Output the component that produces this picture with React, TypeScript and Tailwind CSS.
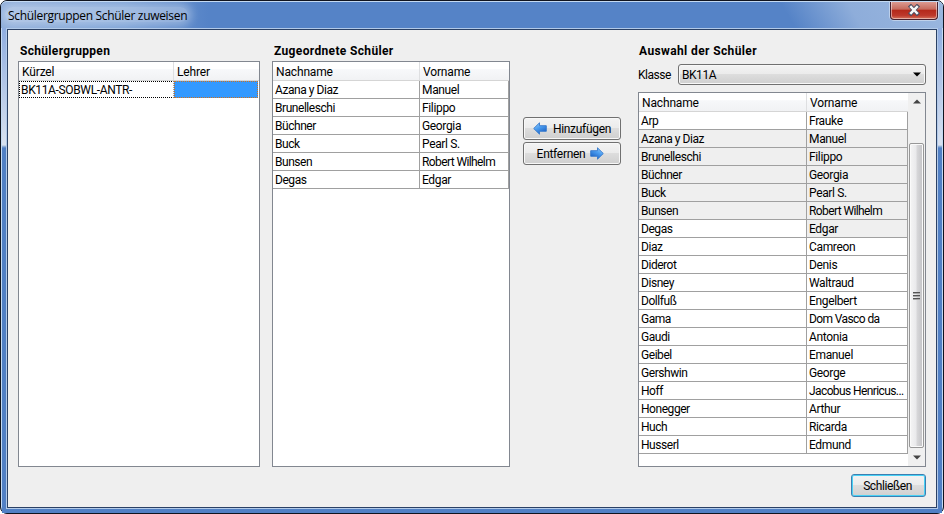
import React from "react";

const assigned = [
  ["Azana y Diaz", "Manuel"],
  ["Brunelleschi", "Filippo"],
  ["Büchner", "Georgia"],
  ["Buck", "Pearl S."],
  ["Bunsen", "Robert Wilhelm"],
  ["Degas", "Edgar"],
];

const pupils = [
  ["Arp", "Frauke"],
  ...assigned,
  ["Diaz", "Camreon"],
  ["Diderot", "Denis"],
  ["Disney", "Waltraud"],
  ["Dollfuß", "Engelbert"],
  ["Gama", "Dom Vasco da"],
  ["Gaudi", "Antonia"],
  ["Geibel", "Emanuel"],
  ["Gershwin", "George"],
  ["Hoff", "Jacobus Henricus..."],
  ["Honegger", "Arthur"],
  ["Huch", "Ricarda"],
  ["Husserl", "Edmund"],
];

function Header({ left, right, leftWidth }: { left: string; right: string; leftWidth: string }) {
  return (
    <div className="flex h-[19px] shrink-0 border-b border-[#d5d5d5] bg-[linear-gradient(#fff_0_40%,#f7f8fa_42%,#f1f2f4)] leading-[20px] tracking-[-0.15px]">
      <div className={`${leftWidth} shrink-0 border-r border-[#dedfe1] pl-[3px]`}>{left}</div>
      <div className="pl-[3px]">{right}</div>
    </div>
  );
}

function Row({ row, leftWidth, grayLeft, grayRight }: { row: string[]; leftWidth: string; grayLeft?: boolean; grayRight?: boolean }) {
  const spacing = row[1].length > 10 ? "tracking-[-0.6px]" : "tracking-[-0.35px]";
  return (
    <div className="flex h-[18px] shrink-0 whitespace-nowrap leading-[19px]">
      <div className={`${leftWidth} shrink-0 border-r border-b border-[#a0a0a0] pl-[2px] ${grayLeft ? "bg-[#efefef]" : "bg-white"}`}>{row[0]}</div>
      <div className={`min-w-0 flex-1 border-r border-b border-[#a0a0a0] pl-[2px] ${spacing} ${grayRight ? "bg-[#efefef]" : "bg-white"}`}>{row[1]}</div>
    </div>
  );
}

function Arrow({ flip }: { flip?: boolean }) {
  return (
    <svg width="14" height="13" viewBox="0 0 14 13" className={flip ? "-scale-x-100" : ""}>
      <defs>
        <linearGradient id="arrow" x1="0" y1="0" x2="0.6" y2="1">
          <stop offset="0" stopColor="#a5d6fb" />
          <stop offset="0.5" stopColor="#4b9df0" />
          <stop offset="1" stopColor="#1c62c4" />
        </linearGradient>
      </defs>
      <path d="M.7 6.5 6.5 .8v2.9h6.8v5.6H6.5v2.9Z" fill="url(#arrow)" stroke="#3478cc" strokeWidth=".9" strokeLinejoin="round" />
    </svg>
  );
}

const button =
  "flex items-center justify-center rounded-[3px] border border-[#707070] bg-[linear-gradient(#f3f3f3,#ebebeb_49%,#dddddd_50%,#cfcfcf)] shadow-[inset_0_0_0_1px_#f8f8f8]";

export default function App() {
  return (
    <div className="h-[514px] w-[944px] overflow-hidden bg-white font-['Roboto','Liberation_Sans',sans-serif] text-[12px] tracking-[-0.45px] text-black">
      <div className="flex h-full flex-col rounded-[7px] border border-[#10141f] bg-[#5180c5] shadow-[inset_0_0_0_1px_#c4daf3]">
        <header className="flex h-[27px] shrink-0 items-start justify-between overflow-hidden rounded-t-[6px] border-t border-[#c4daf3] bg-[linear-gradient(60deg,transparent_83%,#8eadda_90%,#9ab7df),linear-gradient(90deg,#8eadda_0,#789fd5_13%,#5583c7_22%,#5583c7)]">
          <h1 className="mt-[5px] ml-[4px] h-[15px] w-[183px] rounded-[8px] bg-[#ffffff50] pl-[3px] font-['Open_Sans','Noto_Sans',sans-serif] text-[12px] leading-[17px] whitespace-nowrap tracking-[-0.32px] shadow-[0_0_8px_4px_#ffffff50]">Schülergruppen Schüler zuweisen</h1>
          <div className="mt-[-1px] mr-[5px] flex h-[19px] w-[48px] items-center justify-center rounded-b-[4px] border border-t-0 border-[#48202e] bg-[linear-gradient(#dfa198,#c66a5c_46%,#b4281a_50%,#bd382b_80%,#d4725c)] shadow-[inset_0_0_0_1px_#ffffff77,0_0_0_1px_#ffffff66]">
            <svg width="14" height="12" viewBox="0 0 14 12">
              <path d="m3.9 2.6 6.2 6.8m0-6.8-6.2 6.8" stroke="#4c4e62" strokeWidth="4.2" strokeLinecap="square" />
              <path d="m4.1 3 5.8 6m0-6-5.8 6" stroke="#f7f7f7" strokeWidth="2.5" strokeLinecap="square" />
            </svg>
          </div>
        </header>
        <div className="mx-[1px] min-h-0 flex-1 bg-[linear-gradient(#8fade0,#d9e2f0_117px,#a5bddc_118px,#5180c5_120px)] px-1 pb-1">
          <div className="h-full border border-[#b2cae9]">
            <main className="flex h-full border border-[#2b4165] bg-[#efefef] pt-[12px] pl-[10px]">
              <section className="w-[242px] shrink-0">
                <h2 className="h-[19px] pl-[2px] text-[12px] leading-[18px] font-bold tracking-[0.32px]">Schülergruppen</h2>
                <div className="flex h-[406px] flex-col border border-[#828790] bg-white">
                  <Header left="Kürzel" right="Lehrer" leftWidth="w-[155px]" />
                  <div className="flex h-[17px]">
                    <div className="w-[155px] border border-dotted border-black border-r-[#a0a0a0] pl-px leading-[17px] tracking-[-0.35px]">BK11A-SOBWL-ANTR-</div>
                    <div className="mr-px flex-1 border border-dotted border-[#cc7020] bg-[#3399ff] bg-clip-border" />
                  </div>
                </div>
              </section>

              <section className="ml-[12px] w-[238px] shrink-0">
                <h2 className="h-[19px] pl-[2px] text-[12px] leading-[18px] font-bold tracking-[0.35px]">Zugeordnete Schüler</h2>
                <div className="flex h-[406px] flex-col border border-[#828790] bg-white">
                  <Header left="Nachname" right="Vorname" leftWidth="w-[147px]" />
                  {assigned.map((r) => <Row key={r[0]} row={r} leftWidth="w-[147px]" />)}
                </div>
              </section>

              <div className="mt-[75px] ml-[13px] flex w-[98px] shrink-0 flex-col gap-[2px] tracking-[-0.3px]">
                <button className={`${button} h-[23px] gap-[6px]`}><Arrow />Hinzufügen</button>
                <button className={`${button} h-[23px] gap-[5px] pr-[3px]`}>Entfernen<Arrow flip /></button>
              </div>

              <section className="ml-[17px] flex w-[288px] shrink-0 flex-col">
                <h2 className="h-[22px] pl-[1px] text-[12px] leading-[18px] font-bold tracking-[0.38px]">Auswahl der Schüler</h2>
                <div className="flex h-[21px] items-center">
                  <span className="w-[40px]">Klasse</span>
                  <div className={`${button} h-[21px] flex-1 justify-between! pr-[4px] pl-[3px]`}>
                    BK11A
                    <svg width="8" height="5" viewBox="0 0 8 5"><path d="M0 .5h8L4 4.5Z" /></svg>
                  </div>
                </div>
                <div className="mt-[7px] flex h-[375px] border border-[#828790] bg-white">
                  <div className="w-[269px]">
                    <Header left="Nachname" right="Vorname" leftWidth="w-[168px]" />
                    {pupils.map((r, i) => (
                      <Row key={r[0]} row={r} leftWidth="w-[168px]" grayLeft={i > 0 && i < 6} grayRight={i > 0 && i < 7} />
                    ))}
                  </div>
                  <div className="flex w-[17px] flex-col items-center bg-[#f0f0f0]">
                    <svg width="8" height="5" viewBox="0 0 8 5" className="mt-[6px] shrink-0"><path d="M0 4.5h8L4 .5Z" fill="#444" /></svg>
                    <div className="mt-[39px] flex h-[305px] w-[15px] shrink-0 flex-col items-center justify-center gap-px rounded-[2px] border border-[#979797] bg-[linear-gradient(90deg,#f5f5f5,#e9e9eb_48%,#d8d8da_52%,#c2c2c5)] shadow-[inset_0_0_0_1px_#fafafa]">
                      <i className="h-[2px] w-[7px] border-b border-[#aaa] bg-[#555]" />
                      <i className="h-[2px] w-[7px] border-b border-[#aaa] bg-[#555]" />
                      <i className="h-[2px] w-[7px] border-b border-[#aaa] bg-[#555]" />
                    </div>
                    <svg width="8" height="5" viewBox="0 0 8 5" className="mt-[7px] shrink-0"><path d="M0 .5h8L4 4.5Z" fill="#444" /></svg>
                  </div>
                </div>
                <button className="mt-[7px] flex h-[23px] w-[75px] items-center justify-center self-end rounded-[3px] border border-[#3c7fb1] bg-[linear-gradient(#f3f3f3,#ebebeb_49%,#dddddd_50%,#d0d0d0)] pr-[2px] tracking-[-0.4px] shadow-[inset_0_0_0_1px_#48d1f5]">Schließen</button>
              </section>
            </main>
          </div>
        </div>
      </div>
    </div>
  );
}
